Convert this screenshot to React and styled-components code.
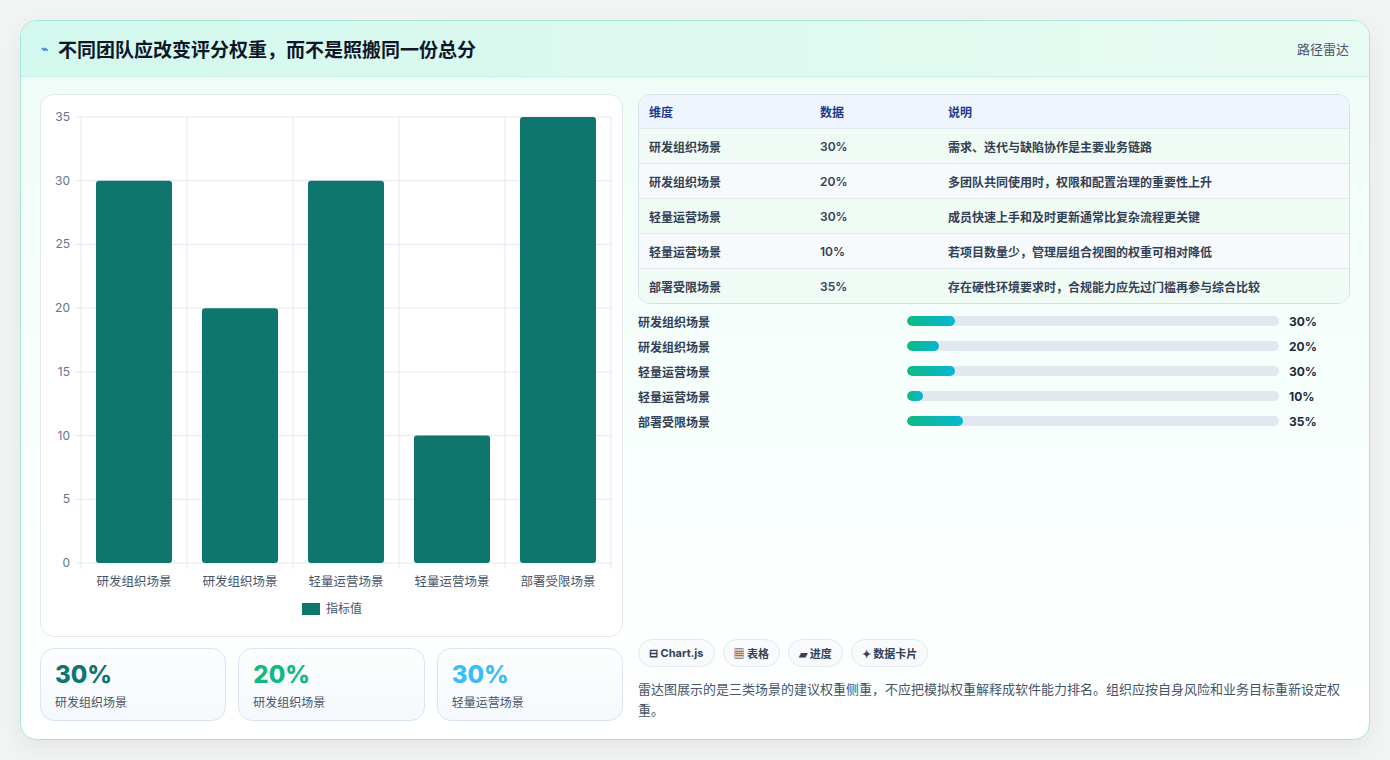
import styled, { createGlobalStyle } from "styled-components";

const Global = createGlobalStyle`
  body { margin: 0; background: #f1f3f4; font-family: Inter, "Noto Sans CJK SC", sans-serif; }
`;

const Page = styled.div`
  width: 1390px;
  height: 760px;
  padding: 20px 20px 20px 20px;
  box-sizing: border-box;
  background: #f2f3f3;
`;

const Card = styled.div`
  width: 1350px;
  height: 720px;
  box-sizing: border-box;
  border: 1px solid #a6e6dc;
  border-radius: 16px;
  overflow: hidden;
  background: linear-gradient(180deg, #effcf7 0%, #f8fffd 60%, #ffffff 100%);
  box-shadow: 0 8px 24px rgba(0, 0, 0, 0.06);
  display: flex;
  flex-direction: column;
`;

const Header = styled.div`
  height: 55px;
  flex: none;
  display: flex;
  align-items: center;
  justify-content: space-between;
  padding: 0 20px;
  background: linear-gradient(90deg, #d3f8ed, #dffaf0 60%, #e9fbf3);
  border-bottom: 1px solid #c4efe3;
`;

const Title = styled.h1`
  margin: 0;
  font-size: 19px;
  font-weight: 700;
  color: #0f172a;
  display: flex;
  align-items: center;
  gap: 10px;
`;

const Tag = styled.span`
  font-size: 13px;
  color: #475569;
`;

const Body = styled.div`
  display: grid;
  grid-template-columns: 583px 1fr;
  gap: 15px;
  padding: 17px 19px 18px 19px;
  flex: 1;
`;

const Col = styled.div`
  display: flex;
  flex-direction: column;
  gap: 11px;
`;

const ChartBox = styled.div`
  height: 543px;
  box-sizing: border-box;
  background: #fff;
  border: 1px solid #e2e8f0;
  border-radius: 14px;
`;

const Stats = styled.div`
  display: grid;
  grid-template-columns: repeat(3, 1fr);
  gap: 12px;
`;

const Stat = styled.div`
  height: 73px;
  box-sizing: border-box;
  border: 1px solid #dbe4f0;
  border-radius: 14px;
  background: linear-gradient(180deg, #fdfefe, #f5f9fd);
  padding: 12px 14px;
`;

const StatValue = styled.div`
  font-size: 24px;
  font-weight: 800;
  color: ${(p) => p.$c};
  line-height: 28px;
`;

const StatLabel = styled.div`
  font-size: 12px;
  color: #475569;
  margin-top: 4px;
`;

const Table = styled.div`
  border: 1px solid #d6e0ea;
  border-radius: 12px;
  overflow: hidden;
  background: #fff;
`;

const Row = styled.div`
  display: grid;
  grid-template-columns: 171px 128px 1fr;
  height: 35px;
  align-items: center;
  padding-left: 10px;
  font-size: 12px;
  font-weight: 600;
  color: ${(p) => (p.$head ? "#1e3a8a" : "#334155")};
  background: ${(p) => (p.$head ? "#eef5fd" : p.$alt ? "#f7fafc" : "#f1fbf6")};
  border-top: ${(p) => (p.$head ? "none" : "1px solid #e3e9ef")};
  box-sizing: border-box;
  height: ${(p) => (p.$head ? "33px" : "35px")};
`;

const Bars = styled.div`
  display: flex;
  flex-direction: column;
  gap: 7px;
  padding-top: 8px;
`;

const BarRow = styled.div`
  display: grid;
  grid-template-columns: 269px 372px auto;
  align-items: center;
  height: 18px;
  font-size: 12px;
  font-weight: 600;
  color: #334155;
`;

const Track = styled.div`
  height: 10px;
  border-radius: 5px;
  background: #e2e8f0;
  overflow: hidden;
`;

const Fill = styled.div`
  height: 100%;
  border-radius: 5px;
  background: linear-gradient(90deg, #10b981, #06b6d4);
`;

const Pct = styled.span`
  padding-left: 10px;
  font-weight: 700;
  color: #1e293b;
`;

const Spacer = styled.div`
  flex: 1;
`;

const Chips = styled.div`
  display: flex;
  gap: 8px;
`;

const Chip = styled.span`
  height: 28px;
  box-sizing: border-box;
  padding: 0 10px;
  border: 1px solid #e2e8f0;
  border-radius: 14px;
  background: #f8fafc;
  font-size: 11px;
  font-weight: 700;
  color: #334155;
  display: flex;
  align-items: center;
  gap: 4px;
`;

const Note = styled.p`
  margin: 12px 0 0;
  font-size: 13px;
  line-height: 21px;
  color: #475569;
`;

const cats = ["研发组织场景", "研发组织场景", "轻量运营场景", "轻量运营场景", "部署受限场景"];
const vals = [30, 20, 30, 10, 35];
const notes = [
  "需求、迭代与缺陷协作是主要业务链路",
  "多团队共同使用时，权限和配置治理的重要性上升",
  "成员快速上手和及时更新通常比复杂流程更关键",
  "若项目数量少，管理层组合视图的权重可相对降低",
  "存在硬性环境要求时，合规能力应先过门槛再参与综合比较",
];

function Chart() {
  const x0 = 40, x1 = 570, y0 = 22, y1 = 468;
  const u = (y1 - y0) / 35;
  const cw = (x1 - x0) / 5;
  return (
    <svg width="582" height="541" style={{ display: "block" }}>
      {[0, 5, 10, 15, 20, 25, 30, 35].map((t) => {
        const y = y1 - t * u;
        return (
          <g key={t}>
            <line x1={x0 - 6} x2={x1} y1={y} y2={y} stroke="#e2e8f0" />
            <text x={x0 - 11} y={y + 4} textAnchor="end" fontSize="12" fill="#64748b">{t}</text>
          </g>
        );
      })}
      {[0, 1, 2, 3, 4, 5].map((i) => (
        <line key={i} x1={x0 + i * cw} x2={x0 + i * cw} y1={y0} y2={y1 + 6} stroke="#e2e8f0" />
      ))}
      {vals.map((v, i) => (
        <rect key={i} x={x0 + i * cw + 15} y={y1 - v * u} width={cw - 30} height={v * u} rx="3" fill="#0f766e" />
      ))}
      {cats.map((c, i) => (
        <text key={i} x={x0 + i * cw + cw / 2} y={y1 + 23} textAnchor="middle" fontSize="12.5" fill="#475569">{c}</text>
      ))}
      <rect x="261" y="508" width="18" height="12" fill="#0f766e" />
      <text x="285" y="518" fontSize="12" fill="#475569">指标值</text>
    </svg>
  );
}

export default function App() {
  return (
    <>
      <Global />
      <Page>
        <Card>
          <Header>
            <Title>
              <span style={{ color: "#3b82f6", fontSize: 12 }}>⌁</span>
              不同团队应改变评分权重，而不是照搬同一份总分
            </Title>
            <Tag>路径雷达</Tag>
          </Header>
          <Body>
            <Col>
              <ChartBox><Chart /></ChartBox>
              <Stats>
                <Stat><StatValue $c="#0f766e">30%</StatValue><StatLabel>研发组织场景</StatLabel></Stat>
                <Stat><StatValue $c="#10b981">20%</StatValue><StatLabel>研发组织场景</StatLabel></Stat>
                <Stat><StatValue $c="#38bdf8">30%</StatValue><StatLabel>轻量运营场景</StatLabel></Stat>
              </Stats>
            </Col>
            <Col style={{ gap: 0 }}>
              <Table>
                <Row $head><span>维度</span><span>数据</span><span>说明</span></Row>
                {cats.map((c, i) => (
                  <Row key={i} $alt={i % 2 === 1}>
                    <span>{c}</span><span>{vals[i]}%</span><span>{notes[i]}</span>
                  </Row>
                ))}
              </Table>
              <Bars>
                {cats.map((c, i) => (
                  <BarRow key={i}>
                    <span>{c}</span>
                    <Track><Fill style={{ width: vals[i] * 1.6 }} /></Track>
                    <Pct>{vals[i]}%</Pct>
                  </BarRow>
                ))}
              </Bars>
              <Spacer />
              <Chips>
                <Chip>⊟ Chart.js</Chip>
                <Chip>▦ 表格</Chip>
                <Chip>▰ 进度</Chip>
                <Chip>✦ 数据卡片</Chip>
              </Chips>
              <Note>雷达图展示的是三类场景的建议权重侧重，不应把模拟权重解释成软件能力排名。组织应按自身风险和业务目标重新设定权重。</Note>
            </Col>
          </Body>
        </Card>
      </Page>
    </>
  );
}
